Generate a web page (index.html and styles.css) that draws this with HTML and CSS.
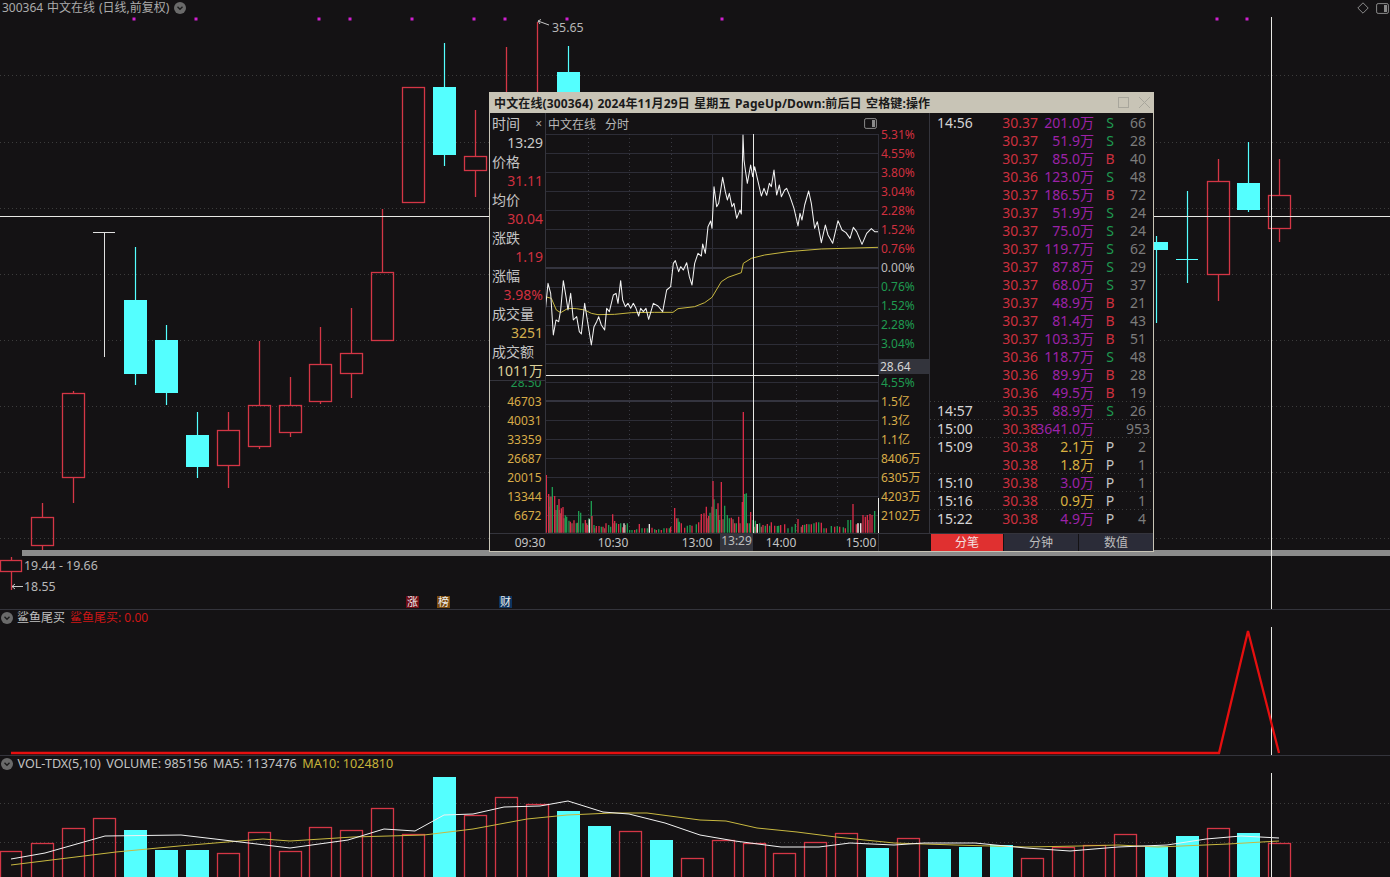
FILE: index.html
```html
<!DOCTYPE html>
<html lang="zh-CN">
<head>
<meta charset="utf-8">
<title>300364 中文在线</title>
<link rel="stylesheet" href="styles.css">
</head>
<body>
<main class="app">

  <section class="pane pane-main">
    <svg class="canvas" width="1390" height="609" viewBox="0 0 1390 609">
      <path class="dots" d="M0 75.5H1390M0 142.5H1390M0 208.5H1390M0 274.5H1390M0 340.5H1390M0 406.5H1390M0 472.5H1390M0 538.5H1390"/>
      <path class="signal" d="M134 19h.01M196 19h.01M319 19h.01M350 19h.01M412 19h.01M474 19h.01M505 19h.01M567 19h.01M722 19h.01M1217 19h.01M1247 19h.01"/>
      <path class="wick-up" d="M42.5 503V517M42.5 546V550M73.5 391V393M73.5 478V503M228.5 412V430M228.5 466V488M259.5 341V405M259.5 447V449M290.5 377V405M290.5 433V437M320.5 327V364M320.5 402V404M351.5 308V353M351.5 374V398M382.5 209V272M475.5 110V156M475.5 171V197M506.5 47V92M537.5 22V92M1218.5 159V181M1218.5 275V301M1279.5 159V195M1279.5 229V242M11.5 557V560M11.5 572V590"/>
      <g class="body-up">
        <rect x="31.5" y="517.5" width="22" height="28"/>
        <rect x="62.5" y="393.5" width="22" height="84"/>
        <rect x="217.5" y="430.5" width="22" height="35"/>
        <rect x="248.5" y="405.5" width="22" height="41"/>
        <rect x="279.5" y="405.5" width="22" height="27"/>
        <rect x="309.5" y="364.5" width="22" height="37"/>
        <rect x="340.5" y="353.5" width="22" height="20"/>
        <rect x="371.5" y="272.5" width="22" height="68"/>
        <rect x="402.5" y="87.5" width="22" height="115"/>
        <rect x="464.5" y="156.5" width="22" height="14"/>
        <rect x="1207.5" y="181.5" width="22" height="93"/>
        <rect x="1268.5" y="195.5" width="22" height="33"/>
        <rect x="0.5" y="560.5" width="21" height="11"/>
      </g>
      <path class="wick-down" d="M135.5 247V300M135.5 374V385M166.5 325V340M166.5 393V405M197.5 412V435M197.5 467V478M444.5 43V87M444.5 155V166M568.5 46V72M1156.5 236V323M1187.5 191V283M1176 259.5H1198M1248.5 142V183M1248.5 210V212"/>
      <g class="body-down">
        <rect x="124" y="300" width="23" height="74"/>
        <rect x="155" y="340" width="23" height="53"/>
        <rect x="186" y="435" width="23" height="32"/>
        <rect x="433" y="87" width="23" height="68"/>
        <rect x="557" y="72" width="23" height="24"/>
        <rect x="1145" y="242" width="23" height="8"/>
        <rect x="1237" y="183" width="23" height="27"/>
      </g>
      <path class="doji" d="M93 232.5H115M104.5 232V357"/>
      <rect class="scrollbar" x="22" y="550" width="1368" height="6"/>
      <path class="cross" d="M0 216.5H1390M1271.5 17V609"/>
      <path class="pointer" d="M549 25L538 21M541 19.5L538 21L540 24M23 586.5H12M15 584L12 586.5L15 589"/>
      <text class="label" x="552" y="32">35.65</text>
      <text class="label" x="24" y="570">19.44 - 19.66</text>
      <text class="label" x="24" y="591">18.55</text>
    </svg>
    <header class="pane-title title-main">
      <span>300364 中文在线 (日线,前复权)</span>
      <svg class="chevron" width="12" height="12" viewBox="0 0 12 12"><circle cx="6" cy="6" r="6"/><path d="M3.5 4.8L6 7.3L8.5 4.8"/></svg>
    </header>
    <div class="corner-tools">
      <svg width="12" height="12" viewBox="0 0 12 12"><path class="tool-stroke" d="M6 .8L11.2 6L6 11.2L.8 6Z"/></svg>
      <svg width="13" height="11" viewBox="0 0 13 11"><rect class="tool-stroke" x=".6" y=".6" width="11.8" height="9.8" rx="1.5"/><rect class="tool-fill" x="8" y="2" width="3" height="7"/></svg>
    </div>
    <span class="badge badge-zhang">涨</span>
    <span class="badge badge-bang">榜</span>
    <span class="badge badge-cai">财</span>
  </section>

  <section class="pane pane-signal">
    <svg class="canvas" width="1390" height="145" viewBox="0 610 1390 145">
      <path class="cross" d="M1271.5 627V755"/>
      <polyline class="shark" points="11,753 1219,753 1248,631 1279,753"/>
    </svg>
    <header class="pane-title title-sub">
      <svg class="chevron" width="12" height="12" viewBox="0 0 12 12"><circle cx="6" cy="6" r="6"/><path d="M3.5 4.8L6 7.3L8.5 4.8"/></svg>
      <span class="name">鲨鱼尾买</span>
      <span class="red-text">鲨鱼尾买: 0.00</span>
    </header>
  </section>

  <section class="pane pane-volume">
    <svg class="canvas" width="1390" height="121" viewBox="0 756 1390 121">
      <path class="dots" d="M0 803.5H1390M0 842.5H1390"/>
      <g class="body-up">
        <rect x="0.5" y="851.5" width="21" height="40"/>
        <rect x="31.5" y="843.5" width="22" height="40"/>
        <rect x="62.5" y="828.5" width="22" height="60"/>
        <rect x="93.5" y="818.5" width="22" height="70"/>
        <rect x="217.5" y="853.5" width="22" height="40"/>
        <rect x="248.5" y="832.5" width="22" height="60"/>
        <rect x="279.5" y="851.5" width="22" height="40"/>
        <rect x="309.5" y="827.5" width="22" height="60"/>
        <rect x="340.5" y="830.5" width="22" height="60"/>
        <rect x="371.5" y="808.5" width="22" height="80"/>
        <rect x="402.5" y="834.5" width="22" height="60"/>
        <rect x="464.5" y="815.5" width="22" height="80"/>
        <rect x="495.5" y="797.5" width="22" height="100"/>
        <rect x="526.5" y="804.5" width="22" height="90"/>
        <rect x="619.5" y="831.5" width="22" height="60"/>
        <rect x="681.5" y="858.5" width="22" height="40"/>
        <rect x="712.5" y="840.5" width="22" height="50"/>
        <rect x="743.5" y="843.5" width="22" height="50"/>
        <rect x="773.5" y="853.5" width="22" height="40"/>
        <rect x="804.5" y="842.5" width="22" height="50"/>
        <rect x="835.5" y="833.5" width="22" height="60"/>
        <rect x="897.5" y="838.5" width="22" height="50"/>
        <rect x="1021.5" y="858.5" width="22" height="40"/>
        <rect x="1052.5" y="847.5" width="22" height="40"/>
        <rect x="1083.5" y="845.5" width="22" height="40"/>
        <rect x="1114.5" y="834.5" width="22" height="50"/>
        <rect x="1207.5" y="828.5" width="22" height="60"/>
        <rect x="1268.5" y="843.5" width="22" height="50"/>
      </g>
      <g class="body-down">
        <rect x="124" y="830" width="23" height="47"/>
        <rect x="155" y="850" width="23" height="27"/>
        <rect x="186" y="850" width="23" height="27"/>
        <rect x="433" y="777" width="23" height="100"/>
        <rect x="557" y="811" width="23" height="66"/>
        <rect x="588" y="826" width="23" height="51"/>
        <rect x="650" y="840" width="23" height="37"/>
        <rect x="866" y="848" width="23" height="29"/>
        <rect x="928" y="849" width="23" height="28"/>
        <rect x="959" y="847" width="23" height="30"/>
        <rect x="990" y="845" width="23" height="32"/>
        <rect x="1145" y="846" width="23" height="31"/>
        <rect x="1176" y="836" width="23" height="41"/>
        <rect x="1237" y="833" width="23" height="44"/>
      </g>
      <polyline class="ma10" points="11,865 116,852 179,846 263,839 290,841 353,837 424,835 473,829 527,819 567,815 612,813 647,813 700,820 726,821 757,828 797,832 836,837 894,843 955,845 1026,847 1079,846 1118,845 1158,847 1228,844 1279,841"/>
      <polyline class="ma5" points="11,859 45,853 105,836 181,835 232,841 290,848 348,840 384,829 415,831 444,815 473,814 504,807 540,806 568,801 603,812 629,814 665,823 700,835 735,841 781,847 819,847 850,843 894,845 924,843 975,843 1026,848 1070,851 1118,847 1167,845 1206,839 1241,836 1279,838"/>
      <path class="cross" d="M1271.5 773V877"/>
    </svg>
    <header class="pane-title title-sub title-vol">
      <svg class="chevron" width="12" height="12" viewBox="0 0 12 12"><circle cx="6" cy="6" r="6"/><path d="M3.5 4.8L6 7.3L8.5 4.8"/></svg>
      <span class="name">VOL-TDX(5,10)</span>
      <span class="name">VOLUME: 985156</span>
      <span class="name">MA5: 1137476</span>
      <span class="gold-text">MA10: 1024810</span>
    </header>
  </section>

  <aside class="popup">
    <header class="popup-title">
      <span>中文在线(300364) 2024年11月29日 星期五 PageUp/Down:前后日 空格键:操作</span>
      <div class="window-tools">
        <svg width="11" height="11" viewBox="0 0 11 11"><rect x=".5" y=".5" width="10" height="10"/></svg>
        <svg width="13" height="13" viewBox="0 0 13 13"><path d="M1 1L12 12M12 1L1 12"/></svg>
      </div>
    </header>

    <div class="popup-upper">
      <div class="tip-col">
        <dl class="tip-box">
          <dt class="tip-head">时间<span class="tip-close">×</span></dt><dd class="v-white">13:29</dd>
          <dt>价格</dt><dd class="v-red">31.11</dd>
          <dt>均价</dt><dd class="v-red">30.04</dd>
          <dt>涨跌</dt><dd class="v-red">1.19</dd>
          <dt>涨幅</dt><dd class="v-red">3.98%</dd>
          <dt>成交量</dt><dd class="v-gold">3251</dd>
          <dt>成交额</dt><dd class="v-cream">1011万</dd>
        </dl>
        <ul class="vol-axis">
          <li class="v-green peek">28.50</li>
          <li>46703</li><li>40031</li><li>33359</li><li>26687</li><li>20015</li><li>13344</li><li>6672</li>
        </ul>
      </div>

      <div class="chart-col">
        <div class="chart-head">
          <span>中文在线</span><span>分时</span>
          <svg class="head-icon" width="13" height="11" viewBox="0 0 13 11"><rect class="tool-stroke" x=".6" y=".6" width="11.8" height="9.8" rx="1.5"/><rect class="tool-fill" x="8" y="2" width="3" height="7"/></svg>
        </div>
        <svg class="canvas" width="333" height="399" viewBox="546 134 333 399">
          <path class="grid-line" d="M546 134.5H879M546 153.5H879M546 172.5H879M546 191.5H879M546 210.5H879M546 229.5H879M546 248.5H879M546 287.5H879M546 306.5H879M546 325.5H879M546 344.5H879M546 363.5H879M546 382.5H879M546 420.5H879M546 439.5H879M546 458.5H879M546 477.5H879M546 496.5H879M546 515.5H879M712.5 134V533M878.5 134V533"/>
          <path class="grid-thick" d="M546 268H879M546 401H879"/>
          <path class="grid-dot" d="M588.5 134V533M629.5 134V533M671.5 134V533M796.5 134V533M837.5 134V533"/>
          <g transform="translate(488 360) scale(.33333)">
            <path class="bar-brown" d="M183 518V440M204 518V450M218 518V460M228 518V475M252 518V490M268 518V488M296 518V490M320 518V505M350 518V505M375 518V490M412 518V495M640 518V480M660 518V475M672 518V440M692 518V465M705 518V478M735 518V478M756 518V490M765 518V490M800 518V500M820 518V500M940 518V500M1110 518V490M1140 518V480"/>
            <path class="bar-green" d="M193 518V381M186 518V410M208 518V435M214 518V450M232 518V466M236 518V470M243 518V482M265 518V490M272 518V453M278 518V458M285 518V490M303 518V475M310 518V423M318 518V495M340 518V500M362 518V495M368 518V500M385 518V490M398 518V490M418 518V490M425 518V510M432 518V510M446 518V508M462 518V505M478 518V505M500 518V508M512 518V508M528 518V505M544 518V505M570 518V475M574 518V485M598 518V497M606 518V495M625 518V493M666 518V458M678 518V418M685 518V447M695 518V480M710 518V437M718 518V465M724 518V475M745 518V490M770 518V402M775 518V400M784 518V490M795 518V480M802 518V482M815 518V490M832 518V497M845 518V497M868 518V498M872 518V497M900 518V505M912 518V500M922 518V492M950 518V494M963 518V493M978 518V490M992 518V487M1008 518V505M1030 518V498M1048 518V498M1066 518V502M1080 518V480M1088 518V480M1160 518V453"/>
            <path class="bar-red" d="M175 518V345M182 518V402M189 518V410M200 518V408M213 518V417M220 518V445M225 518V441M247 518V485M258 518V481M292 518V480M298 518V495M312 518V468M325 518V498M333 518V498M345 518V500M354 518V490M374 518V463M380 518V483M392 518V492M404 518V502M440 518V510M454 518V492M470 518V505M492 518V503M505 518V510M520 518V510M536 518V505M548 518V500M560 518V444M566 518V475M580 518V490M590 518V503M612 518V497M632 518V487M640 518V462M648 518V460M655 518V440M662 518V468M675 518V363M690 518V430M700 518V366M730 518V473M740 518V490M752 518V470M763 518V426M766 518V156M778 518V490M788 518V456M806 518V492M825 518V495M838 518V492M850 518V487M860 518V497M878 518V495M890 518V493M930 518V477M944 518V495M956 518V492M970 518V493M985 518V487M1000 518V488M1015 518V505M1040 518V500M1055 518V500M1072 518V505M1095 518V432M1105 518V493M1118 518V490M1125 518V465M1132 518V470M1138 518V465M1146 518V462M1152 518V465"/>
            <path class="bar-white" d="M304 518V478M408 518V490M484 518V492M808 518V492M1110 518V490M1118 518V490"/>
          </g>
          <g transform="translate(488 90) scale(.33333)">
            <polyline class="price-avg" points="172,620 190,625 205,660 218,668 240,655 265,656 290,660 310,670 330,674 380,673 430,668 500,667 555,667 570,656 620,650 650,638 672,622 685,600 700,575 720,562 760,548 766,520 790,505 830,495 900,485 1000,477 1170,472"/>
            <polyline class="price-line" points="172,660 180,580 188,610 196,735 204,690 212,695 218,660 226,572 234,620 240,660 248,610 256,690 266,680 274,725 280,732 290,640 298,690 310,765 318,710 326,695 332,680 340,705 350,720 356,655 364,665 376,615 384,610 390,640 398,572 404,630 412,650 420,640 428,655 436,640 444,655 452,678 458,655 466,665 474,655 482,688 496,640 510,648 524,665 536,600 548,590 556,520 562,512 572,545 578,530 586,540 596,518 604,560 612,585 620,520 630,490 640,498 644,462 652,490 660,410 668,393 672,415 678,290 686,350 692,340 704,262 712,305 718,330 724,310 732,350 738,340 746,385 756,360 760,372 765,135 768,210 772,240 778,280 788,225 794,260 800,230 808,265 820,318 828,295 836,316 844,280 850,290 858,240 866,315 874,285 880,320 890,300 896,295 906,320 918,355 930,408 936,370 942,390 950,345 962,303 970,340 980,415 988,395 1000,458 1012,405 1020,435 1034,460 1050,392 1062,420 1074,428 1086,445 1096,412 1106,425 1122,463 1136,430 1150,416 1160,425 1170,425"/>
          </g>
          <path class="cross" d="M546 375.5H879M753.5 134V533M878.5 498V533"/>
        </svg>
      </div>

      <ul class="axis-col">
        <li class="v-red">5.31%</li><li class="v-red">4.55%</li><li class="v-red">3.80%</li><li class="v-red">3.04%</li><li class="v-red">2.28%</li><li class="v-red">1.52%</li><li class="v-red">0.76%</li>
        <li class="v-soft">0.00%</li>
        <li class="v-green">0.76%</li><li class="v-green">1.52%</li><li class="v-green">2.28%</li><li class="v-green">3.04%</li>
        <li class="axis-tag-row"><span class="axis-tag">28.64</span></li>
        <li class="v-green">4.55%</li>
        <li>1.5亿</li><li>1.3亿</li><li>1.1亿</li><li>8406万</li><li>6305万</li><li>4203万</li><li>2102万</li>
      </ul>

      <ul class="tick-col">
        <li class="tick"><span class="t-time">14:56</span><span class="t-price">30.37</span><span class="t-amt">201.0万</span><span class="t-s">S</span><span class="t-n">66</span></li>
        <li class="tick"><span class="t-time"></span><span class="t-price">30.37</span><span class="t-amt">51.9万</span><span class="t-s">S</span><span class="t-n">28</span></li>
        <li class="tick"><span class="t-time"></span><span class="t-price">30.37</span><span class="t-amt">85.0万</span><span class="t-b">B</span><span class="t-n">40</span></li>
        <li class="tick"><span class="t-time"></span><span class="t-price">30.36</span><span class="t-amt">123.0万</span><span class="t-s">S</span><span class="t-n">48</span></li>
        <li class="tick"><span class="t-time"></span><span class="t-price">30.37</span><span class="t-amt">186.5万</span><span class="t-b">B</span><span class="t-n">72</span></li>
        <li class="tick"><span class="t-time"></span><span class="t-price">30.37</span><span class="t-amt">51.9万</span><span class="t-s">S</span><span class="t-n">24</span></li>
        <li class="tick"><span class="t-time"></span><span class="t-price">30.37</span><span class="t-amt">75.0万</span><span class="t-s">S</span><span class="t-n">24</span></li>
        <li class="tick"><span class="t-time"></span><span class="t-price">30.37</span><span class="t-amt">119.7万</span><span class="t-s">S</span><span class="t-n">62</span></li>
        <li class="tick"><span class="t-time"></span><span class="t-price">30.37</span><span class="t-amt">87.8万</span><span class="t-s">S</span><span class="t-n">29</span></li>
        <li class="tick"><span class="t-time"></span><span class="t-price">30.37</span><span class="t-amt">68.0万</span><span class="t-s">S</span><span class="t-n">37</span></li>
        <li class="tick"><span class="t-time"></span><span class="t-price">30.37</span><span class="t-amt">48.9万</span><span class="t-b">B</span><span class="t-n">21</span></li>
        <li class="tick"><span class="t-time"></span><span class="t-price">30.37</span><span class="t-amt">81.4万</span><span class="t-b">B</span><span class="t-n">43</span></li>
        <li class="tick"><span class="t-time"></span><span class="t-price">30.37</span><span class="t-amt">103.3万</span><span class="t-b">B</span><span class="t-n">51</span></li>
        <li class="tick"><span class="t-time"></span><span class="t-price">30.36</span><span class="t-amt">118.7万</span><span class="t-s">S</span><span class="t-n">48</span></li>
        <li class="tick"><span class="t-time"></span><span class="t-price">30.36</span><span class="t-amt">89.9万</span><span class="t-b">B</span><span class="t-n">28</span></li>
        <li class="tick sep"><span class="t-time"></span><span class="t-price">30.36</span><span class="t-amt">49.5万</span><span class="t-b">B</span><span class="t-n">19</span></li>
        <li class="tick sep"><span class="t-time">14:57</span><span class="t-price">30.35</span><span class="t-amt">88.9万</span><span class="t-s">S</span><span class="t-n">26</span></li>
        <li class="tick sep"><span class="t-time">15:00</span><span class="t-price">30.38</span><span class="t-amt">3641.0万</span><span class="t-p"></span><span class="t-n">953</span></li>
        <li class="tick"><span class="t-time">15:09</span><span class="t-price">30.38</span><span class="t-amt amt-gold">2.1万</span><span class="t-p">P</span><span class="t-n">2</span></li>
        <li class="tick sep"><span class="t-time"></span><span class="t-price">30.38</span><span class="t-amt amt-gold">1.8万</span><span class="t-p">P</span><span class="t-n">1</span></li>
        <li class="tick sep"><span class="t-time">15:10</span><span class="t-price">30.38</span><span class="t-amt">3.0万</span><span class="t-p">P</span><span class="t-n">1</span></li>
        <li class="tick sep"><span class="t-time">15:16</span><span class="t-price">30.38</span><span class="t-amt amt-gold">0.9万</span><span class="t-p">P</span><span class="t-n">1</span></li>
        <li class="tick"><span class="t-time">15:22</span><span class="t-price">30.38</span><span class="t-amt">4.9万</span><span class="t-p">P</span><span class="t-n">4</span></li>
      </ul>
    </div>

    <div class="popup-lower">
      <div class="time-axis">
        <span class="tm tm-0930">09:30</span>
        <span class="tm tm-1030">10:30</span>
        <span class="tm tm-1300">13:00</span>
        <span class="tm tm-now">13:29</span>
        <span class="tm tm-1400">14:00</span>
        <span class="tm tm-1500">15:00</span>
      </div>
      <div class="tabs">
        <span class="tab tab-active">分笔</span>
        <span class="tab">分钟</span>
        <span class="tab">数值</span>
      </div>
    </div>
  </aside>
</main>
</body>
</html>
```

FILE: styles.css
```css
* { box-sizing: border-box; }
html, body { margin: 0; padding: 0; background: #141214; }
body { font-family: "Noto Sans", "Noto Sans CJK SC", sans-serif; font-size: 12px; color: #bbb; }
ul, dl, dd { margin: 0; padding: 0; list-style: none; }

.app { position: relative; width: 1390px; height: 877px; overflow: hidden; display: flex; flex-direction: column; }
.pane { position: relative; flex: none; border-bottom: 1px solid #34343c; }
.pane-main { height: 610px; }
.pane-signal { height: 146px; }
.pane-volume { height: 121px; border-bottom: 0; }
.canvas { display: block; }

.pane-title { position: absolute; left: 0; top: 0; display: flex; align-items: center; line-height: 16px; white-space: nowrap; color: #c2c2c2; }
.title-main { padding-left: 2px; gap: 5px; color: #ababab; word-spacing: .8px; }
.title-sub { top: 0; padding: 0 0 0 1px; gap: 5px; }
.title-sub .chevron { margin-right: -1px; }
.title-vol { font-size: 12.6px; gap: 5.5px; }
.red-text { color: #d01616; }
.gold-text { color: #c8b43a; }
.chevron circle { fill: #6a6a6a; }
.chevron path { fill: none; stroke: #1c1c1c; stroke-width: 1.4; }

.corner-tools { position: absolute; right: 1px; top: 2px; display: flex; gap: 7px; align-items: center; }
.tool-stroke { fill: none; stroke: #8a8a8a; stroke-width: 1; }
.tool-fill { fill: #8a8a8a; }

.badge { position: absolute; top: 596px; width: 13px; height: 12px; font-size: 11px; line-height: 12px; text-align: center; color: #eee; }
.badge-zhang { left: 406px; background: #6e0c14; }
.badge-bang { left: 437px; background: #7a4a0e; }
.badge-cai { left: 499px; background: #0e3460; }

.dots { fill: none; stroke: #3c3c3c; stroke-width: 1; stroke-dasharray: 1 3; }
.signal { fill: none; stroke: #d020d0; stroke-width: 3; stroke-linecap: square; }
.wick-up { fill: none; stroke: #d43646; stroke-width: 1.3; }
.body-up rect { fill: none; stroke: #d43646; stroke-width: 1.3; }
.wick-down { fill: none; stroke: #54ffff; stroke-width: 1.2; }
.body-down rect { fill: #54ffff; }
.doji { fill: none; stroke: #e0e0e0; stroke-width: 1; }
.scrollbar { fill: #8b8b8b; }
.cross { fill: none; stroke: #e8e8e4; stroke-width: 1; }
.pointer { fill: none; stroke: #c8c8c8; stroke-width: 1; }
.label { fill: #b8b8b8; font-size: 12.4px; }
.shark { fill: none; stroke: #e60f0f; stroke-width: 2.3; }
.ma5 { fill: none; stroke: #f2f2f2; stroke-width: 1; }
.ma10 { fill: none; stroke: #c8b840; stroke-width: 1; }

/* detail popup */
.popup { position: absolute; left: 489px; top: 92px; width: 665px; height: 460px; display: flex; flex-direction: column; background: #141214; border: 1px solid #c8c4b6; border-top-width: 0; }
.popup-title { flex: none; height: 21px; display: flex; align-items: center; justify-content: space-between; padding: 0 2px 0 4px; background: #c8c4b6; color: #1a1a1a; font-weight: 700; white-space: nowrap; letter-spacing: .15px; word-spacing: 1px; }
.window-tools { display: flex; align-items: center; gap: 9px; }
.window-tools rect, .window-tools path { fill: none; stroke: #a8a69c; stroke-width: 1; }

.popup-upper { flex: none; height: 420px; display: flex; }
.tip-col { flex: none; width: 56px; border-right: 1px solid #34343c; }
.tip-box { height: 268px; padding: 1px 2px 0; border-bottom: 1px solid #34343c; font-size: 14px; line-height: 19px; white-space: nowrap; }
.tip-box dt { color: #c4c4c4; }
.tip-box dd { text-align: right; }
.tip-head { display: flex; justify-content: space-between; }
.tip-close { font-size: 12px; color: #aaa; padding-right: 1px; }
.v-white { color: #c8c8c8; }
.v-red { color: #d0303f; }
.v-gold { color: #d4b050; }
.v-cream { color: #dcd098; }
.v-green { color: #1f9a50; }
.v-soft { color: #bdbdbd; }
.vol-axis { padding-right: 3.5px; text-align: right; line-height: 19px; color: #d8ac48; }
.peek { height: 10.5px; line-height: 3px; overflow: hidden; }

.chart-col { flex: none; width: 333px; }
.chart-head { height: 21px; display: flex; align-items: center; padding: 0 2px 0 2px; gap: 9px; color: #b8b8b8; }
.head-icon { margin-left: auto; }
.grid-line { fill: none; stroke: #2d2d37; stroke-width: 1; }
.grid-thick { fill: none; stroke: #34343f; stroke-width: 2; }
.grid-dot { fill: none; stroke: #3a3a42; stroke-width: 1; stroke-dasharray: 1 3; }
.bar-red { fill: none; stroke: #d82c48; stroke-width: 4; }
.bar-green { fill: none; stroke: #1e9a50; stroke-width: 4; }
.bar-brown { fill: none; stroke: #8c5a50; stroke-width: 4; }
.bar-white { fill: none; stroke: #e8e8e8; stroke-width: 4; }
.price-line { fill: none; stroke: #f4f4f4; stroke-width: 3.1; stroke-linejoin: round; }
.price-avg { fill: none; stroke: #c8b840; stroke-width: 3; }

.axis-col { flex: none; width: 51px; padding: 11.5px 0 0 2px; border-right: 1px solid #34343c; line-height: 19px; color: #d8ac48; white-space: nowrap; }
.axis-tag-row { position: relative; height: 20px; }
.axis-tag { position: absolute; left: -2px; right: 0; top: 6px; height: 15px; line-height: 15px; padding-left: 1px; background: #33343c; color: #d6d6d6; }

.tick-col { flex: none; width: 223px; padding: 1px 0 0 0; font-size: 14px; line-height: 18px; white-space: nowrap; }
.tick { display: grid; grid-template-columns: 65px 36px 56px 32px 20px; height: 18px; padding-left: 7px; }
.tick.sep { background-image: linear-gradient(to right, #3c3c3c 1px, transparent 1px); background-size: 4px 1px; background-repeat: repeat-x; background-position: 0 100%; }
.t-time { color: #d4d4d4; }
.t-price { color: #cc303f; text-align: right; }
.t-amt { color: #9c22a8; display: flex; justify-content: flex-end; }
.amt-gold { color: #d8b040; }
.t-s { color: #1f9a50; text-align: center; }
.t-b { color: #cc303f; text-align: center; }
.t-p { color: #c4c4c4; text-align: center; }
.t-n { color: #7c7c7c; text-align: right; }

.popup-lower { flex: 1; display: flex; border-top: 1px solid #34343c; }
.time-axis { flex: none; width: 389px; display: flex; align-items: stretch; line-height: 17px; color: #c4c4c4; border-right: 1px solid #34343c; }
.tm { flex: none; width: 32px; text-align: center; white-space: nowrap; }
.tm-0930 { margin-left: 24px; }
.tm-1030 { margin-left: 51px; }
.tm-1300 { margin-left: 52px; }
.tm-now { margin-left: 7px; width: 33px; background: #33343c; line-height: 13px; color: #bcbcbc; }
.tm-1400 { margin-left: 12px; }
.tm-1500 { margin-left: 48px; }
.tabs { flex: none; margin-left: 51px; width: 223px; display: flex; gap: 1px; padding-left: 1px; }
.tab { flex: 1; background: #2b2c38; text-align: center; line-height: 17px; color: #bdbdbd; }
.tab-active { flex: none; width: 72px; background: #e03030; color: #f4e0e0; }
```
